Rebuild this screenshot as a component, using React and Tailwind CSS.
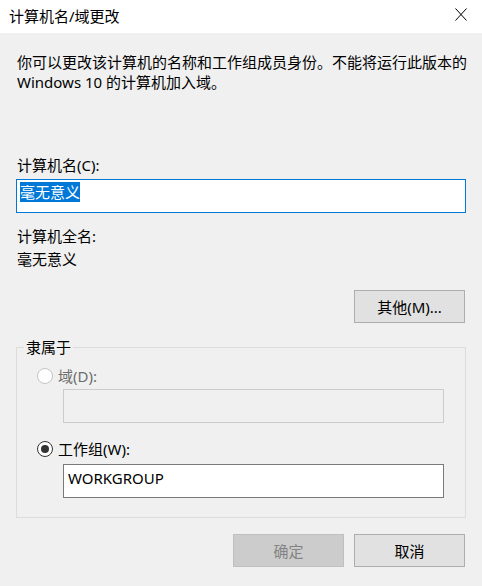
import React from 'react';

const font = { fontFamily: '"Noto Sans", "Noto Sans CJK SC", sans-serif' };

function Radio({ checked, disabled }) {
  return (
    <span
      className={`flex h-4 w-4 items-center justify-center rounded-full border bg-white ${
        disabled ? 'border-[#c4c4c4] bg-[#f0f0f0]' : 'border-[#333333]'
      }`}
    >
      {checked && <span className="h-2 w-2 rounded-full bg-[#333333]" />}
    </span>
  );
}

function WinButton({ children, disabled }) {
  return (
    <button
      className={`h-[33px] w-[111px] border text-[15px] leading-5 ${
        disabled
          ? 'border-[#bfbfbf] bg-[#cccccc] text-[#838383]'
          : 'border-[#adadad] bg-[#e1e1e1] text-black'
      }`}
    >
      {children}
    </button>
  );
}

export default function App() {
  return (
    <div className="h-[586px] w-[482px] overflow-hidden bg-[#f0f0f0] text-[15px] leading-5 text-black" style={font}>
      {/* title bar */}
      <div className="flex h-[33px] items-center justify-between bg-white pl-[9px] pr-[15px]">
        <span className="-mt-[1px]">计算机名/域更改</span>
        <svg width="12" height="13" viewBox="0 0 12 13" className="-mt-[4px]">
          <path d="M0.5 0.5 L11.5 12.5 M11.5 0.5 L0.5 12.5" stroke="#000" strokeWidth="1" fill="none" />
        </svg>
      </div>

      <div className="px-4 pt-[19px]">
        <p className="pl-[1px] whitespace-nowrap">
          你可以更改该计算机的名称和工作组成员身份。不能将运行此版本的
          <br />
          Windows 10 的计算机加入域。
        </p>

        <div className="mt-[63px] pl-[1px]">计算机名(C):</div>
        <div className="mt-1 h-[34px] border border-[#0078d7] bg-white pl-[3px] pt-[2px]">
          <span className="bg-[#0078d7] text-white">毫无意义</span>
        </div>

        <div className="mt-[13px] pl-[1px]">计算机全名:</div>
        <div className="mt-[3px] pl-[1px]">毫无意义</div>

        <div className="mr-[1px] mt-[21px] flex justify-end">
          <WinButton>其他(M)...</WinButton>
        </div>

        <fieldset className="mt-[14px] border border-[#dcdcdc] pb-[19px]">
          <legend className="ml-[7px] px-[2px]">隶属于</legend>
          <div className="mt-[9px] flex items-center gap-[5px] pl-5 text-[#6d6d6d]">
            <Radio disabled />
            <span>域(D):</span>
          </div>
          <div className="ml-[46px] mr-[21px] mt-[3px] h-[34px] border border-[#cccccc] bg-[#f0f0f0]" />
          <div className="mt-[16px] flex items-center gap-[5px] pl-5">
            <Radio checked />
            <span>工作组(W):</span>
          </div>
          <div className="ml-[46px] mr-[21px] mt-[5px] h-[34px] border border-[#7a7a7a] bg-white pl-1 pt-[3px]">
            WORKGROUP
          </div>
        </fieldset>

        <div className="mr-[1px] mt-[16px] flex justify-end gap-[10px]">
          <WinButton disabled>确定</WinButton>
          <WinButton>取消</WinButton>
        </div>
      </div>
    </div>
  );
}
